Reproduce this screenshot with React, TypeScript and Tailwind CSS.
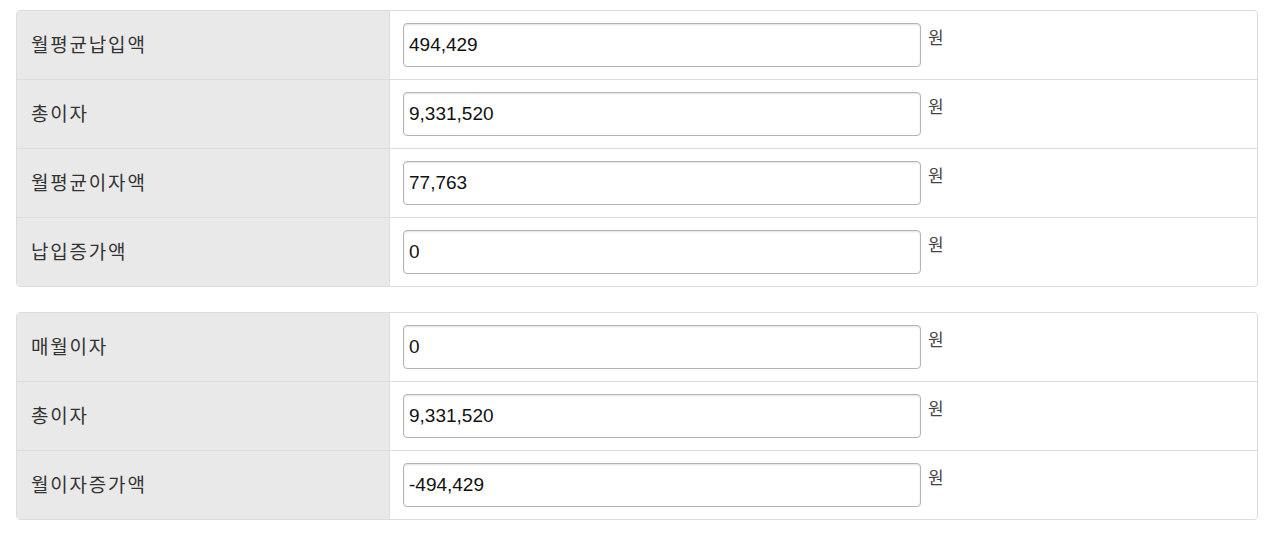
import React from 'react';

type Row = { label: string; value: string };

const first: Row[] = [
  { label: '월평균납입액', value: '494,429' },
  { label: '총이자', value: '9,331,520' },
  { label: '월평균이자액', value: '77,763' },
  { label: '납입증가액', value: '0' },
];

const second: Row[] = [
  { label: '매월이자', value: '0' },
  { label: '총이자', value: '9,331,520' },
  { label: '월이자증가액', value: '-494,429' },
];

const kr = { fontFamily: '"Noto Sans CJK KR", "Liberation Sans", sans-serif' };
const num = { fontFamily: '"Liberation Sans", Arial, sans-serif' };

function Panel({ rows }: { rows: Row[] }) {
  return (
    <div className="w-[1242px] overflow-hidden rounded-[4px] border border-[#dcdcdc] bg-white">
      {rows.map((r, i) => (
        <div
          key={i}
          className={`flex h-[68px] ${i > 0 ? 'box-content border-t border-[#dcdcdc]' : ''}`}
        >
          <div
            className="flex w-[373px] shrink-0 items-center border-r border-[#dcdcdc] bg-[#e9e9e9] pb-[2px] pl-[14px] text-[19px] tracking-[1.8px] text-[#333]"
            style={kr}
          >
            {r.label}
          </div>
          <div className="flex flex-1 items-start gap-[7px] px-[13px] pt-[12px]">
            <input
              readOnly
              value={r.value}
              className="h-[44px] w-[518px] rounded-[4px] border border-[#b4b4b4] bg-white px-[5px] text-[19px] text-[#111] shadow-[inset_0_1px_2px_rgba(0,0,0,0.12)] outline-none"
              style={num}
            />
            <span className="mt-[3px] text-[17px] leading-[22px] text-[#444]" style={kr}>
              원
            </span>
          </div>
        </div>
      ))}
    </div>
  );
}

export default function App() {
  return (
    <div className="min-h-[536px] bg-white pl-4 pt-[10px]">
      <Panel rows={first} />
      <div className="h-[25px]" />
      <Panel rows={second} />
    </div>
  );
}
